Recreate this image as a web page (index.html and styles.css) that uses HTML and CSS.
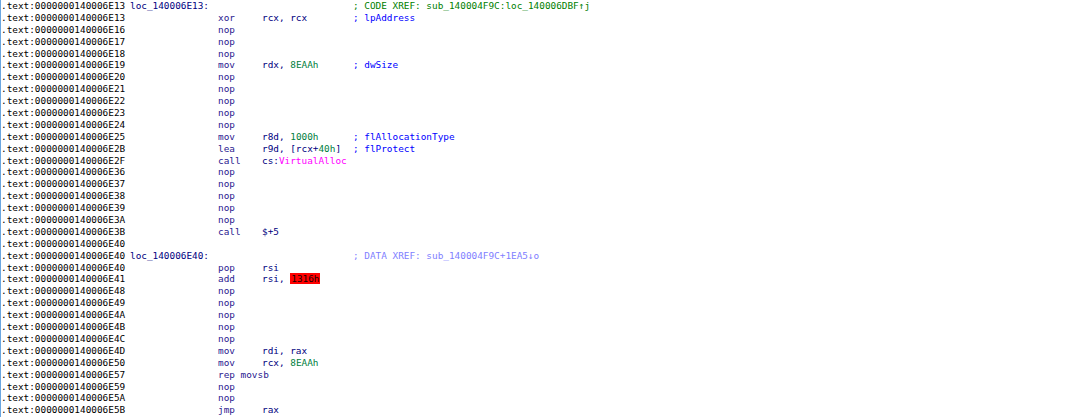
FILE: index.html
```html
<!DOCTYPE html>
<html lang="en">
<head>
    <meta charset="UTF-8">
    <title>IDA View-A</title>
    <link rel="stylesheet" href="styles.css">
</head>
<body>
<div id="listing">
    <div class="row"><span class="addr">.text:0000000140006E13</span><span class="label">loc_140006E13:</span><span class="xref">; CODE XREF: sub_140004F9C:loc_140006DBF&uarr;j</span></div>
    <div class="row"><span class="addr">.text:0000000140006E13</span><span class="mn">xor</span><span class="op">rcx, rcx</span><span class="cmt">; lpAddress</span></div>
    <div class="row"><span class="addr">.text:0000000140006E16</span><span class="mn">nop</span></div>
    <div class="row"><span class="addr">.text:0000000140006E17</span><span class="mn">nop</span></div>
    <div class="row"><span class="addr">.text:0000000140006E18</span><span class="mn">nop</span></div>
    <div class="row"><span class="addr">.text:0000000140006E19</span><span class="mn">mov</span><span class="op">rdx, <span class="num">8EAAh</span></span><span class="cmt">; dwSize</span></div>
    <div class="row"><span class="addr">.text:0000000140006E20</span><span class="mn">nop</span></div>
    <div class="row"><span class="addr">.text:0000000140006E21</span><span class="mn">nop</span></div>
    <div class="row"><span class="addr">.text:0000000140006E22</span><span class="mn">nop</span></div>
    <div class="row"><span class="addr">.text:0000000140006E23</span><span class="mn">nop</span></div>
    <div class="row"><span class="addr">.text:0000000140006E24</span><span class="mn">nop</span></div>
    <div class="row"><span class="addr">.text:0000000140006E25</span><span class="mn">mov</span><span class="op">r8d, <span class="num">1000h</span></span><span class="cmt">; flAllocationType</span></div>
    <div class="row"><span class="addr">.text:0000000140006E2B</span><span class="mn">lea</span><span class="op">r9d, [rcx+<span class="num">40h</span>]</span><span class="cmt">; flProtect</span></div>
    <div class="row"><span class="addr">.text:0000000140006E2F</span><span class="mn">call</span><span class="op">cs:<span class="imp">VirtualAlloc</span></span></div>
    <div class="row"><span class="addr">.text:0000000140006E36</span><span class="mn">nop</span></div>
    <div class="row"><span class="addr">.text:0000000140006E37</span><span class="mn">nop</span></div>
    <div class="row"><span class="addr">.text:0000000140006E38</span><span class="mn">nop</span></div>
    <div class="row"><span class="addr">.text:0000000140006E39</span><span class="mn">nop</span></div>
    <div class="row"><span class="addr">.text:0000000140006E3A</span><span class="mn">nop</span></div>
    <div class="row"><span class="addr">.text:0000000140006E3B</span><span class="mn">call</span><span class="op">$+5</span></div>
    <div class="row"><span class="addr">.text:0000000140006E40</span></div>
    <div class="row"><span class="addr">.text:0000000140006E40</span><span class="label">loc_140006E40:</span><span class="dxref">; DATA XREF: sub_140004F9C+1EA5&darr;o</span></div>
    <div class="row"><span class="addr">.text:0000000140006E40</span><span class="mn">pop</span><span class="op">rsi</span></div>
    <div class="row"><span class="addr">.text:0000000140006E41</span><span class="mn">add</span><span class="op">rsi, <span class="hl">1316h</span></span></div>
    <div class="row"><span class="addr">.text:0000000140006E48</span><span class="mn">nop</span></div>
    <div class="row"><span class="addr">.text:0000000140006E49</span><span class="mn">nop</span></div>
    <div class="row"><span class="addr">.text:0000000140006E4A</span><span class="mn">nop</span></div>
    <div class="row"><span class="addr">.text:0000000140006E4B</span><span class="mn">nop</span></div>
    <div class="row"><span class="addr">.text:0000000140006E4C</span><span class="mn">nop</span></div>
    <div class="row"><span class="addr">.text:0000000140006E4D</span><span class="mn">mov</span><span class="op">rdi, rax</span></div>
    <div class="row"><span class="addr">.text:0000000140006E50</span><span class="mn">mov</span><span class="op">rcx, <span class="num">8EAAh</span></span></div>
    <div class="row"><span class="addr">.text:0000000140006E57</span><span class="mn">rep movsb</span></div>
    <div class="row"><span class="addr">.text:0000000140006E59</span><span class="mn">nop</span></div>
    <div class="row"><span class="addr">.text:0000000140006E5A</span><span class="mn">nop</span></div>
    <div class="row"><span class="addr">.text:0000000140006E5B</span><span class="mn">jmp</span><span class="op">rax</span></div>
</div>
</body>
</html>
```
FILE: styles.css
```css
/* Listing view */
body {
    margin: 0;
    background-color: #fff;
    font-family: "DejaVu Sans Mono", "Liberation Mono", monospace;
    font-size: 9.4px;
    color: #000;
}

#listing {
    border-left: 1px solid #6aa6e0;
    height: 417px;
    overflow: hidden;
}

.row {
    display: flex;
    height: 11.9px;
    line-height: 11.9px;
    white-space: nowrap;
}

.addr {
    width: 129px;
    flex-shrink: 0;
    color: #000;
}

.label {
    width: 223px;
    flex-shrink: 0;
    color: #000080;
}

.mn {
    width: 44px;
    flex-shrink: 0;
    margin-left: 88px;
    color: #2a2090;
}

.op {
    width: 91px;
    flex-shrink: 0;
    color: #000080;
}

.cmt {
    color: #0000ff;
}

.xref {
    color: #008000;
}

.dxref {
    color: #8080ff;
}

.num {
    color: #008040;
}

.imp {
    color: #ff00ff;
}

.hl {
    display: inline-block;
    height: 11px;
    line-height: 11px;
    background-color: #ff0000;
    color: #200000;
    padding: 0 1px;
}
```
